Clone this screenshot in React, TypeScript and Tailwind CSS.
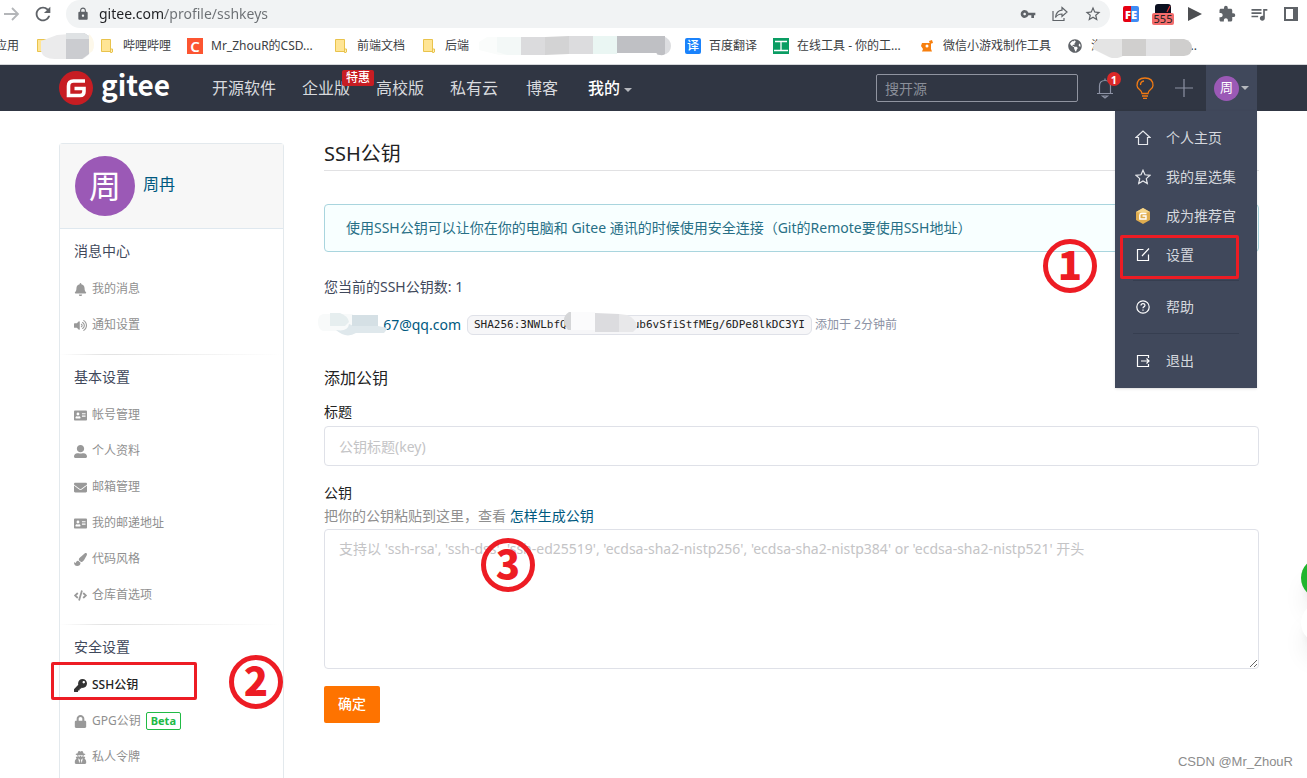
import type { ReactNode } from "react";
import type { IconType } from "react-icons";
import {
  FaAddressCard,
  FaBell,
  FaCode,
  FaEnvelope,
  FaGlobeAmericas,
  FaKey,
  FaLock,
  FaPaintBrush,
  FaUserAlt,
  FaUserSecret,
  FaVolumeUp,
} from "react-icons/fa";
import { MdExtension, MdLock, MdQueueMusic, MdRefresh, MdStarBorder, MdVpnKey } from "react-icons/md";

function Marker({ n, className }: { n: number; className: string }) {
  return (
    <span
      className={`absolute z-20 flex size-[54px] items-center justify-center rounded-full border-[5px] border-[#ed1c24] pb-1.5 font-['Noto_Sans_CJK_SC',sans-serif] text-[40px] leading-none font-black text-[#ed1c24] ${className}`}
    >
      {n}
    </span>
  );
}

function FolderIcon() {
  return (
    <svg viewBox="0 0 16 16" className="size-4">
      <path d="M2.5 1.5h9v10h2v2h-11z" fill="#ffe595" stroke="#e9c34c" />
      <path d="M11.5 11v3.5h1.5l.5-.5v-3z" fill="#fff0b8" stroke="#e9c34c" />
    </svg>
  );
}

function Bookmark({ icon, width, children }: { icon: ReactNode; width: string; children?: ReactNode }) {
  return (
    <a href="#" className="flex shrink-0 items-center gap-2">
      <span className="flex size-4 items-center justify-center">{icon}</span>
      <span className={`whitespace-nowrap ${width}`}>{children}</span>
    </a>
  );
}

function BrowserBar() {
  return (
    <div className="border-b border-[#d5d7da] bg-white text-[#3c4043]">
      <div className="flex h-7 items-center">
        <button aria-label="前进" className="ml-1 flex w-4 justify-center">
          <svg viewBox="0 0 16 16" className="size-4" fill="none" stroke="#b4b6b9" strokeWidth="1.8">
            <path d="M0 8h13M8 2l6 6-6 6" />
          </svg>
        </button>
        <button aria-label="刷新" className="ml-3 flex w-[22px] justify-center">
          <MdRefresh className="size-[22px] text-[#5f6368]" />
        </button>
        <div className="ml-3 flex h-7 flex-1 items-center rounded-full bg-[#f1f3f4] pr-2 pl-2.5">
          <MdLock className="size-3.5 text-[#5f6368]" />
          {/* host dark, path grey */}
          <input
            aria-label="地址"
            defaultValue="gitee.com/profile/sshkeys"
            className="ml-[9px] min-w-0 flex-1 bg-linear-to-r from-[#202124] from-[66px] to-[#6b6f73] to-[66px] bg-clip-text text-sm leading-5 text-transparent outline-none"
          />
          <div className="flex items-center gap-4 text-[#5f6368]">
            <MdVpnKey className="size-4" />
            <svg viewBox="0 0 16 16" className="size-4" fill="none" stroke="currentColor" strokeWidth="1.2">
              <path d="M1 5v9.500h11V12" />
              <path d="M10 1.500l5 4.500-5 4.500V8C7 8 5 9 3.500 11.500 4 7 6.500 4.500 10 4.200z" />
            </svg>
            <MdStarBorder className="size-[18px]" />
          </div>
        </div>
        <div className="ml-[5px] flex text-[#5f6368]">
          <div className="flex w-8 items-center justify-center">
            <span className="flex size-4 items-center justify-center rounded-xs bg-linear-to-r from-[#e60012] from-50% to-[#3f8cf4] to-50% text-[11px] leading-none font-black text-white">
              FE
            </span>
          </div>
          <div className="flex w-8 flex-col items-center">
            <svg viewBox="0 0 16 9" className="h-[9px] w-4">
              <path d="M0 9V3q0-3 3-3h10q3 0 3 3v6z" fill="#0b1020" />
              <path d="M15 2l-3 6" stroke="#d33" strokeWidth="1.2" />
            </svg>
            <span className="rounded-xs bg-[#f36c6c] px-0.5 text-[11px] leading-3 text-[#222]">555</span>
          </div>
          <div className="flex w-8 items-center justify-center">
            <svg viewBox="0 0 16 16" className="size-4">
              <path d="M1 1l14 7-14 7z" fill="#4d4f52" />
            </svg>
          </div>
          <div className="flex w-8 items-center justify-center">
            <MdExtension className="size-[18px]" />
          </div>
          <div className="flex w-8 items-center justify-center">
            <MdQueueMusic className="size-5" />
          </div>
          <div className="flex w-8 items-center justify-center">
            <svg viewBox="0 0 14 14" className="size-3.5">
              <path d="M1 1h12v12H1z" fill="none" stroke="currentColor" strokeWidth="2" />
              <path d="M9 1h4v12H9z" fill="currentColor" />
            </svg>
          </div>
        </div>
      </div>

      <div className="flex h-9 items-center gap-4 overflow-hidden text-xs">
        <a href="#" className="-ml-[5px] shrink-0">应用</a>
        <div className="relative">
          <Bookmark icon={<FolderIcon />} width="w-6" />
          <svg viewBox="0 0 56 28" className="absolute -top-1.5 left-1 h-7 w-14">
            <path d="M2 19V9L18 3l26-2q9 3 9 12t-9 14H16Q4 27 2 19z" fill="#ebebec" />
            <path d="M50 2q5 4 5 11t-5 8z" fill="#fdf8ea" />
            <path d="M27 1h18l5 3v18l-7 5H27z" fill="#cbccd0" />
            <path d="M27 1h18l5 3v3H27z" fill="#dfe2e4" />
          </svg>
        </div>
        <Bookmark icon={<FolderIcon />} width="w-12">哔哩哔哩</Bookmark>
        <Bookmark
          icon={<span className="flex size-4 items-center justify-center bg-[#fc5531] text-[15px] leading-none font-semibold text-white">C</span>}
          width="w-[106px]"
        >
          Mr_ZhouR的CSD...
        </Bookmark>
        <Bookmark icon={<FolderIcon />} width="w-12">前端文档</Bookmark>
        <Bookmark icon={<FolderIcon />} width="w-6">后端</Bookmark>
        <svg viewBox="0 0 192 20" className="-mr-0.5 -ml-1.5 h-5 w-48 shrink-0">
          <path d="M8 1h38v18H20L0 14V6z" fill="#fafcfb" />
          <path d="M18 1h24v18H28l-10-3z" fill="#f3f8f7" />
          <path d="M42 1h24v18H42z" fill="#dbdbdd" />
          <path d="M66 1l24-1v18l-24 1z" fill="#d3d3d4" />
          <path d="M90 0h24v18H90z" fill="#dcdcde" />
          <path d="M114 0h24v18h-24z" fill="#eaf6f3" />
          <path d="M182 0h2q8 3 8 10t-8 9h-6z" fill="#dcdde0" />
          <path d="M138 0h48v18q-4 3-9-1h-39z" fill="#bfc0c4" />
        </svg>
        <Bookmark
          icon={<span className="flex size-4 items-center justify-center rounded-xs bg-[#1a82fb] text-xs leading-none font-medium text-white">译</span>}
          width="w-12"
        >
          百度翻译
        </Bookmark>
        <Bookmark
          icon={
            <svg viewBox="0 0 16 16" className="size-4">
              <path d="M0 0h16v16H0z" fill="#0a9d63" />
              <path d="M2 3.500h12M8 3.500v9M1 12.500h14" stroke="#fff" strokeWidth="1.3" />
            </svg>
          }
          width="w-[106px]"
        >
          在线工具 - 你的工...
        </Bookmark>
        <Bookmark
          icon={
            <svg viewBox="0 0 16 16" className="size-4" fill="#f77f0e">
              <path d="M3 5h9v6l1 2.500H3l1-2.500-2-3z" />
              <path d="M10 3l3-1 1 3-3 1z" />
              <circle cx="8" cy="8" r="1.5" fill="#fff" />
            </svg>
          }
          width="w-[108px]"
        >
          微信小游戏制作工具
        </Bookmark>
        <div className="relative">
          <Bookmark icon={<FaGlobeAmericas className="size-3.5 text-[#5f6368]" />} width="w-[106px]">
            <span className="flex justify-between">
              <span>汽</span>
              <span>..</span>
            </span>
          </Bookmark>
          <svg viewBox="0 0 100 20" className="absolute top-0 left-[26px] h-5 w-[100px]">
            <path d="M6 1h24v17q-8 4-14 1L0 11q0-7 6-10z" fill="#e4e4e4" />
            <path d="M29 1h24v17H29z" fill="#d0cfce" />
            <path d="M53 1h24v17H53z" fill="#e3e3e5" />
            <path d="M77 1h14q8 2 8 9t-8 8H77z" fill="#cfcecd" />
          </svg>
        </div>
      </div>
    </div>
  );
}

function MenuItem({ icon, children, marked }: { icon: ReactNode; children: ReactNode; marked?: boolean }) {
  return (
    <a href="#" className="relative flex h-[39px] items-center gap-[15px] pl-5">
      <span className="flex size-4 items-center justify-center">{icon}</span>
      {children}
      {marked && (
        <>
          <span className="absolute top-0 right-[18px] left-[5px] h-11 rounded-xs border-3 border-[#ed1c24]" />
          <Marker n={1} className="top-1 -left-[72px]" />
        </>
      )}
    </a>
  );
}

function UserMenu() {
  return (
    <div className="absolute top-full right-0 z-10 w-[142px] bg-[#40485b] pt-[7px] pb-2 text-sm text-[#d5d8de] shadow-sm">
      <MenuItem
        icon={
          <svg viewBox="0 0 16 16" className="size-4" fill="none" stroke="#e6e8ec" strokeWidth="1.2">
            <path d="M3.500 7.500H1L8 1l7 6.500h-2.500V14.500h-9z" />
          </svg>
        }
      >
        个人主页
      </MenuItem>
      <MenuItem
        icon={
          <svg viewBox="0 0 16 16" className="size-4" fill="none" stroke="#e6e8ec" strokeWidth="1.2">
            <path d="M8 1.200l2 4.600 5 .5-3.700 3.300 1 5L8 12l-4.300 2.600 1-5L1 6.300l5-.5z" />
          </svg>
        }
      >
        我的星选集
      </MenuItem>
      <MenuItem
        icon={
          <svg viewBox="0 0 16 16" className="size-4">
            <path d="M8 0l7 4v8l-7 4-7-4V4z" fill="#e0ad50" />
            <path d="M8 0l7 4-7 1-7-1z" fill="#f4d58c" />
            <path d="M11.500 5.500H6.500Q4.800 5.500 4.800 7.200V11H11V8H7.500" fill="none" stroke="#fff" strokeWidth="1.4" />
          </svg>
        }
      >
        成为推荐官
      </MenuItem>
      <MenuItem
        marked
        icon={
          <svg viewBox="0 0 16 16" className="size-4" fill="none" stroke="#fff" strokeWidth="1.2">
            <path d="M8.500 2.500h-6v11h11v-6M7 9l7-7.500" />
          </svg>
        }
      >
        设置
      </MenuItem>
      <hr className="mx-[18px] my-1.5 border-[#363e50]" />
      <MenuItem
        icon={
          <svg viewBox="0 0 16 16" className="size-4" fill="none" stroke="#fff" strokeWidth="1.2">
            <circle cx="8" cy="8" r="6.2" />
            <path d="M6 6.600q0-2 2-2t2 1.700q0 1-1.200 1.600-.8.400-.8 1.400M8 10.600v1.200" />
          </svg>
        }
      >
        帮助
      </MenuItem>
      <hr className="mx-[18px] my-[7px] border-[#363e50]" />
      <MenuItem
        icon={
          <svg viewBox="0 0 16 16" className="size-4" fill="none" stroke="#fff" strokeWidth="1.2">
            <path d="M13.500 5V2.500h-11v11h11V11M6 8h8M11.500 5.500L14 8l-2.500 2.500" />
          </svg>
        }
      >
        退出
      </MenuItem>
    </div>
  );
}

function Header() {
  return (
    <header className="flex h-[46px] shrink-0 items-center bg-[#303643] pr-[50px] pl-[59px] text-[#d8dade]">
      <a href="#" className="flex w-[153px] items-center gap-2">
        <svg viewBox="0 0 34 34" className="size-[34px]">
          <circle cx="17" cy="17" r="17" fill="#c71d23" />
          <path
            d="M26 10H14.500Q9.500 10 9.500 15v9.500H21q4 0 4-4V17.500H15.500"
            fill="none"
            stroke="#fff"
            strokeWidth="3.6"
          />
        </svg>
        <span className="pb-2 font-['Noto_Sans_CJK_SC',sans-serif] text-[28px] leading-8 font-bold text-white">gitee</span>
      </a>
      <nav className="flex shrink-0 items-center gap-[26px] leading-6">
        <a href="#">开源软件</a>
        <a href="#" className="relative">
          企业版
          <span className="absolute -top-1.5 left-10 rounded-xs bg-[#c71d23] px-1 text-xs leading-4 font-medium whitespace-nowrap text-white">
            特惠
          </span>
        </a>
        <a href="#">高校版</a>
        <a href="#">私有云</a>
        <a href="#" className="ml-0.5">博客</a>
        <a href="#" className="ml-1 flex items-center gap-1 font-medium text-white">
          我的
          <svg viewBox="0 0 8 4" className="mt-1 h-1 w-2">
            <path d="M0 0h8L4 4z" fill="#b5b8be" />
          </svg>
        </a>
      </nav>
      <input
        aria-label="搜索"
        placeholder="搜开源"
        className="ml-auto h-7 w-[202px] rounded-xs border border-[#9094a0] bg-transparent px-2 text-sm placeholder:text-[#8a8f99]"
      />
      <button aria-label="通知" className="relative ml-[17px]">
        <svg viewBox="0 0 20 22" className="h-[22px] w-5" fill="none" stroke="#8c92a4" strokeWidth="1.2">
          <path d="M2 16.500h16M4.500 16V9q0-5.500 5.500-5.500t5.500 5.500v7M10 3.500V1.500M7.500 19h5L10 21z" />
        </svg>
        <span className="absolute -top-[5px] left-3 flex size-3.5 items-center justify-center rounded-full bg-[#db2828] text-[11px] leading-none font-bold text-white">
          1
        </span>
      </button>
      <button aria-label="建议" className="ml-5">
        <svg viewBox="0 0 20 22" className="h-[22px] w-5" fill="none" stroke="#f17a13" strokeWidth="1.3">
          <path d="M7 16.500q0-2-2.500-4Q2 10.500 2 8.500q0-7.500 8-7.500t8 7.500q0 2-2.500 4-2.500 2-2.500 4zM7 19h6M8 21.300h4M5.500 8Q5.500 4.500 9 4" />
        </svg>
      </button>
      <button aria-label="新建" className="ml-5">
        <svg viewBox="0 0 18 18" className="size-[18px]" fill="none" stroke="#8c92a4" strokeWidth="1.2">
          <path d="M9 0v18M0 9h18" />
        </svg>
      </button>
      <div className="relative ml-[13px] h-full bg-[#40485b]">
        <button className="flex h-full w-[51px] items-center gap-0.5 pl-2">
          <span className="flex size-[25px] items-center justify-center rounded-full bg-[#9b59b6] text-[13px] text-white">周</span>
          <svg viewBox="0 0 8 4" className="h-1 w-2">
            <path d="M0 0h8L4 4z" fill="#b5b8be" />
          </svg>
        </button>
        <UserMenu />
      </div>
    </header>
  );
}

type Item = { icon: IconType; label: string; active?: boolean; beta?: boolean };

const sections: { title: string; items: Item[] }[] = [
  {
    title: "消息中心",
    items: [
      { icon: FaBell, label: "我的消息" },
      { icon: FaVolumeUp, label: "通知设置" },
    ],
  },
  {
    title: "基本设置",
    items: [
      { icon: FaAddressCard, label: "帐号管理" },
      { icon: FaUserAlt, label: "个人资料" },
      { icon: FaEnvelope, label: "邮箱管理" },
      { icon: FaAddressCard, label: "我的邮递地址" },
      { icon: FaPaintBrush, label: "代码风格" },
      { icon: FaCode, label: "仓库首选项" },
    ],
  },
  {
    title: "安全设置",
    items: [
      { icon: FaKey, label: "SSH公钥", active: true },
      { icon: FaLock, label: "GPG公钥", beta: true },
      { icon: FaUserSecret, label: "私人令牌" },
    ],
  },
];

function Sidebar() {
  return (
    <aside className="w-[225px] shrink-0 rounded-t-sm border border-b-0 border-[#e3e9ed]">
      <div className="flex h-[85px] items-center gap-2 border-b border-[#dfe8ef] bg-[#f7f7f7] pl-[15px]">
        <span className="flex size-[60px] items-center justify-center rounded-full bg-[#9b59b6] text-[32px] leading-none text-white">
          周
        </span>
        <a href="#" className="pb-1 text-base text-[#005980]">周冉</a>
      </div>
      {sections.map((section, i) => (
        <div key={section.title}>
          {i > 0 && <div className="h-px bg-linear-to-r from-white via-[#e2e2e2] via-20% to-white" />}
          <div className="pt-0.5 pb-[11px]">
            <h3 className="flex h-10 items-center pl-3.5 text-sm text-[#40485b]">{section.title}</h3>
            {section.items.map(({ icon: Icon, label, active, beta }) => (
              <div key={label} className="relative flex h-9 items-center pl-[13px] text-xs">
                <a
                  href="#"
                  className={active ? "flex items-center gap-[5px] font-medium text-[#222]" : "flex items-center gap-[5px] text-[#8f8f8f]"}
                >
                  <span className="flex w-3.5 justify-center">
                    <Icon className={active ? "size-[13px] text-[#333]" : "size-[13px] text-[#999]"} />
                  </span>
                  {label}
                </a>
                {beta && (
                  <span className="ml-[5px] rounded-xs border border-[#21ba45] px-1 text-[11px] leading-4 font-bold text-[#21ba45]">
                    Beta
                  </span>
                )}
                {active && (
                  <>
                    <span className="absolute -top-[5px] -left-[9px] h-[38px] w-[146px] rounded-xs border-3 border-[#ed1c24]" />
                    <Marker n={2} className="-top-3 left-[169px]" />
                  </>
                )}
              </div>
            ))}
          </div>
        </div>
      ))}
    </aside>
  );
}

function KeyRow() {
  return (
    <div className="mt-[18px] flex h-5 items-center text-sm">
      <div className="relative w-[137px] text-right">
        <a href="#" className="text-[#005980]">67@qq.com</a>
        <svg viewBox="0 0 72 24" className="absolute -top-0.5 -left-1.5 h-6 w-[72px]">
          <path d="M5 1h30v17H5Q0 16 0 9t5-8z" fill="#f8fafa" />
          <path d="M12 0h10q8 3 9 9l-4 4H12z" fill="#e6eeef" />
          <path d="M18 17q12 2 13-6l5 2h24l10 2-4 5H38q-10 6-20-3z" fill="#dfe8ec" />
          <path d="M34 2h26v11H34z" fill="#d5e0e5" />
        </svg>
      </div>
      <div className="relative ml-1.5 flex rounded-md border border-[#dfe1e8] bg-[#f6f6f8] px-1.5 font-['DejaVu_Sans_Mono',monospace] text-[11px] leading-[18px] text-[#222]">
        <span>SHA256:3NWLbfQ</span>
        <span className="w-[66px]" />
        <span>ub6vSfiStfMEg/6DPe8lkDC3YI</span>
        <svg viewBox="0 0 76 20" className="absolute -top-1 left-24 h-5 w-[76px]">
          <path d="M5 0h3v18H4Q0 13 0 8t5-8z" fill="#d5d6d8" />
          <path d="M7 0h24v18H7z" fill="#fbfbfc" />
          <path d="M31 1l24 1v18H31z" fill="#dcdcdf" />
          <path d="M55 2l8 1q9 3 10 13l-4 4H55z" fill="#e8e8ea" />
        </svg>
      </div>
      <span className="ml-[3px] text-xs text-[#8c92a4]">添加于 2分钟前</span>
    </div>
  );
}

function Main() {
  return (
    <main className="min-w-0 flex-1 text-sm text-[#40485b]">
      <h2 className="border-b border-[#e1e1e3] pb-[5px] text-xl leading-[22px] text-[#222]">SSH公钥</h2>
      <div className="mt-[33px] flex h-12 items-center rounded-sm border border-[#a9d5de] bg-[#f8ffff] px-[21px] text-[#276f86]">
        使用SSH公钥可以让你在你的电脑和 Gitee 通讯的时候使用安全连接（Git的Remote要使用SSH地址）
      </div>
      <p className="mt-[25px] leading-5">您当前的SSH公钥数: 1</p>
      <KeyRow />
      <h3 className="mt-[31px] text-base leading-6 text-[#222]">添加公钥</h3>
      <form>
        <label htmlFor="key-title" className="mt-3 block leading-5 text-[#222]">标题</label>
        <input
          id="key-title"
          placeholder="公钥标题(key)"
          className="mt-1 block h-10 w-full rounded-sm border border-[#dfe1e8] px-3.5 placeholder:text-[#c4c4c6]"
        />
        <label htmlFor="key-body" className="mt-[17px] block leading-5 text-[#222]">公钥</label>
        <p className="pt-px leading-6 text-[#8f8f8f]">
          把你的公钥粘贴到这里，查看 <a href="#" className="text-[#005980]">怎样生成公钥</a>
        </p>
        <div className="relative mt-px">
          <textarea
            id="key-body"
            placeholder="支持以 'ssh-rsa', 'ssh-dss', 'ssh-ed25519', 'ecdsa-sha2-nistp256', 'ecdsa-sha2-nistp384' or 'ecdsa-sha2-nistp521' 开头"
            className="block h-[140px] w-full rounded-sm border border-[#dfe1e8] px-3.5 py-[9px] leading-5 placeholder:text-[#c4c4c6]"
          />
          <Marker n={3} className="top-[9px] left-[157px]" />
        </div>
        <button type="button" className="mt-[17px] h-[37px] w-14 rounded-xs bg-[#fe7300] pb-0.5 font-medium text-white">
          确定
        </button>
      </form>
    </main>
  );
}

export default function App() {
  return (
    <div className="relative flex h-screen flex-col overflow-hidden bg-white font-['Noto_Sans','Noto_Sans_CJK_SC',sans-serif]">
      <BrowserBar />
      <Header />
      <div className="flex min-h-0 flex-1 gap-10 pt-8 pr-12 pl-[59px]">
        <Sidebar />
        <Main />
      </div>
      <div className="absolute -right-[34px] bottom-[135px] flex flex-col gap-[5px]">
        <button aria-label="客服" className="size-10 rounded-full bg-[#21b52e] shadow-xl" />
        <button aria-label="返回顶部" className="size-10 rounded-full bg-white shadow-xl" />
      </div>
      <span className="absolute right-3.5 bottom-1.5 font-['Liberation_Sans',sans-serif] text-[13px] leading-5 text-[#8c8c8c]">
        CSDN @Mr_ZhouR
      </span>
    </div>
  );
}
